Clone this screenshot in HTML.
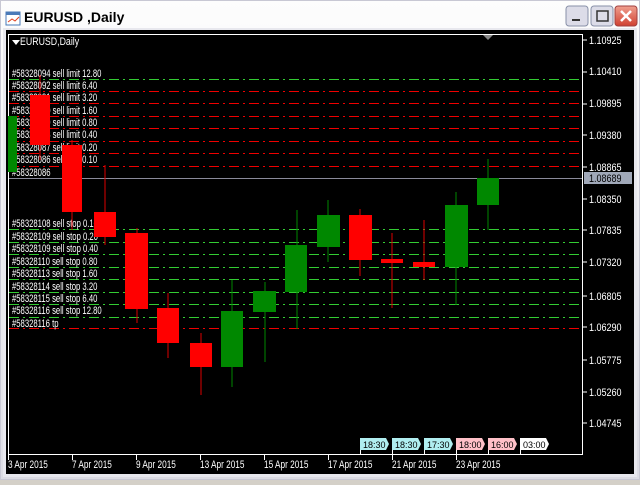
<!DOCTYPE html><html><head><style>
body{margin:0;width:640px;height:480px;overflow:hidden;background:#d4d0c8;font-family:"Liberation Sans",sans-serif}
</style></head><body>
<svg width="640" height="480" xmlns="http://www.w3.org/2000/svg" font-family="Liberation Sans, sans-serif">
<defs><linearGradient id="tb" x1="0" y1="0" x2="0" y2="1"><stop offset="0" stop-color="#fdfdfd"/><stop offset="1" stop-color="#dcdce4"/></linearGradient>
<linearGradient id="cb" x1="0" y1="0" x2="0" y2="1"><stop offset="0" stop-color="#f0a090"/><stop offset="1" stop-color="#d04030"/></linearGradient></defs>
<rect x="0" y="0" width="640" height="480" fill="#c8c8d4"/>
<rect x="1" y="1" width="638" height="478" fill="url(#tb)"/>
<rect x="3" y="28" width="634" height="449" fill="#e8e8ee"/>
<rect x="6" y="12" width="14" height="13" fill="#fff" stroke="#4a7ab8"/><rect x="6" y="12" width="14" height="3" fill="#4a7ab8"/><path d="M8 22l4-3 3 2 4-4" stroke="#e04020" fill="none"/>
<text x="24" y="22" font-size="14" font-weight="bold" fill="#000">EURUSD ,Daily</text>
<rect x="566" y="6" width="22" height="20" rx="3" fill="#dcdce8" stroke="#8890a8"/><rect x="572" y="19" width="8" height="2" fill="#333"/>
<rect x="591" y="6" width="22" height="20" rx="3" fill="#dcdce8" stroke="#8890a8"/><rect x="597" y="11" width="11" height="10" fill="none" stroke="#333" stroke-width="1.5"/>
<rect x="615" y="6" width="22" height="20" rx="3" fill="url(#cb)" stroke="#a04040"/><path d="M621 11l10 10M631 11l-10 10" stroke="#fff" stroke-width="2.5"/>
<rect x="6" y="30" width="628" height="444" fill="#000"/>
<rect x="8.5" y="34.5" width="574" height="420" fill="none" stroke="#fff"/>
<path d="M483 35l5 5 5-5z" fill="#888"/>
<path d="M12 40l4 5 4-5z" fill="#fff"/>
<text x="20" y="45" font-size="11" fill="#fff" transform="translate(20,0) scale(0.8,1) translate(-20,0)">EURUSD,Daily</text>
<g fill="none" stroke-dasharray="10 4 2 4">
<path d="M9 79.5H582" stroke="#3c3"/>
<path d="M9 91.5H582M9 103.5H582M9 116.5H582M9 128.5H582M9 141.5H582M9 153.5H582M9 166.5H582" stroke="#e00"/>
<path d="M9 229.5H582M9 242.5H582M9 254.5H582M9 267.5H582M9 279.5H582M9 292.5H582M9 304.5H582M9 317.5H582" stroke="#3c3"/>
<path d="M9 328.5H582" stroke="#e00"/>
</g>
<path d="M9 178.5H582" stroke="#8a8a9a"/>
<g font-size="11" fill="#fff" transform="translate(12,0) scale(0.7,1)">
<text x="0" y="77">#58328094 sell limit 12.80</text>
<text x="0" y="89">#58328092 sell limit 6.40</text>
<text x="0" y="101">#58328091 sell limit 3.20</text>
<text x="0" y="114">#58328090 sell limit 1.60</text>
<text x="0" y="126">#58328089 sell limit 0.80</text>
<text x="0" y="138">#58328088 sell limit 0.40</text>
<text x="0" y="151">#58328087 sell limit 0.20</text>
<text x="0" y="163">#58328086 sell limit 0.10</text>
<text x="0" y="176">#58328086</text>
<text x="0" y="227">#58328108 sell stop 0.10</text>
<text x="0" y="240">#58328109 sell stop 0.20</text>
<text x="0" y="252">#58328109 sell stop 0.40</text>
<text x="0" y="265">#58328110 sell stop 0.80</text>
<text x="0" y="277">#58328113 sell stop 1.60</text>
<text x="0" y="290">#58328114 sell stop 3.20</text>
<text x="0" y="302">#58328115 sell stop 6.40</text>
<text x="0" y="314">#58328116 sell stop 12.80</text>
<text x="0" y="327">#58328116 tp</text>
</g>
<g stroke-width="1">
<rect x="8" y="116" width="9" height="56" fill="#080"/>
<path d="M40 75V160M72 140V230M105 165V245M137 228V323M168 293V358M201 333V395M360 209V276M392 233V308M424 220V280" stroke="#d00"/>
<path d="M232 280V387M265 282V362M297 210V329M328 200V262M456 192V305M488 159V230" stroke="#080"/>
<g fill="#f00"><rect x="30" y="95" width="20" height="50"/><rect x="62" y="145" width="20" height="67"/><rect x="94" y="212" width="22" height="25"/><rect x="125" y="233" width="23" height="76"/><rect x="157" y="308" width="22" height="35"/><rect x="190" y="343" width="22" height="24"/><rect x="349" y="215" width="23" height="45"/><rect x="381" y="259" width="22" height="4"/><rect x="413" y="262" width="22" height="5"/></g>
<g fill="#080"><rect x="221" y="311" width="22" height="56"/><rect x="253" y="291" width="23" height="21"/><rect x="285" y="245" width="22" height="47"/><rect x="317" y="215" width="23" height="32"/><rect x="445" y="205" width="23" height="62"/><rect x="477" y="178" width="22" height="27"/></g>
</g>
<g stroke="#fff">
<path d="M583 40h4M583 72h4M583 104h4M583 135h4M583 167h4M583 199h4M583 230h4M583 262h4M583 296h4M583 327h4M583 360h4M583 392h4M583 423h4"/>
</g>
<g font-size="11" fill="#fff" transform="translate(589,0) scale(0.82,1)">
<text x="0" y="44">1.10925</text><text x="0" y="75">1.10410</text><text x="0" y="107">1.09895</text><text x="0" y="139">1.09380</text><text x="0" y="171">1.08865</text><text x="0" y="203">1.08350</text><text x="0" y="234">1.07835</text><text x="0" y="266">1.07320</text><text x="0" y="300">1.06805</text><text x="0" y="331">1.06290</text><text x="0" y="364">1.05775</text><text x="0" y="396">1.05260</text><text x="0" y="427">1.04745</text>
</g>
<rect x="584" y="172" width="48" height="12" fill="#a0a8b8"/><text x="589" y="182" font-size="11" fill="#000" transform="translate(589,0) scale(0.82,1) translate(-589,0)">1.08689</text>
<path d="M8.5 454v6M72.5 454v6M136.5 454v6M200.5 454v6M264.5 454v6M328.5 454v6M392.5 454v6M456.5 454v6M360.5 450v4M392.5 450v4M424.5 450v4M456.5 450v4M488.5 450v4M520.5 450v4" stroke="#fff"/>
<g font-size="11" fill="#fff">
<text x="8" y="468" transform="translate(8,0) scale(0.75,1) translate(-8,0)">3 Apr 2015</text>
<text x="72" y="468" transform="translate(72,0) scale(0.75,1) translate(-72,0)">7 Apr 2015</text>
<text x="136" y="468" transform="translate(136,0) scale(0.75,1) translate(-136,0)">9 Apr 2015</text>
<text x="200" y="468" transform="translate(200,0) scale(0.75,1) translate(-200,0)">13 Apr 2015</text>
<text x="264" y="468" transform="translate(264,0) scale(0.75,1) translate(-264,0)">15 Apr 2015</text>
<text x="328" y="468" transform="translate(328,0) scale(0.75,1) translate(-328,0)">17 Apr 2015</text>
<text x="392" y="468" transform="translate(392,0) scale(0.75,1) translate(-392,0)">21 Apr 2015</text>
<text x="456" y="468" transform="translate(456,0) scale(0.75,1) translate(-456,0)">23 Apr 2015</text>
</g>
<g font-size="9" fill="#000">
<path d="M360 438h26l3 6-3 6h-26z" fill="#b0eef0"/><text x="363" y="448">18:30</text>
<path d="M392 438h26l3 6-3 6h-26z" fill="#b0eef0"/><text x="395" y="448">18:30</text>
<path d="M424 438h26l3 6-3 6h-26z" fill="#b0eef0"/><text x="427" y="448">17:30</text>
<path d="M456 438h26l3 6-3 6h-26z" fill="#ffc0c8"/><text x="459" y="448">18:00</text>
<path d="M488 438h26l3 6-3 6h-26z" fill="#ffc0c8"/><text x="491" y="448">16:00</text>
<path d="M520 438h26l3 6-3 6h-26z" fill="#fff"/><text x="523" y="448">03:00</text>
</g>
</svg>
</body></html>
